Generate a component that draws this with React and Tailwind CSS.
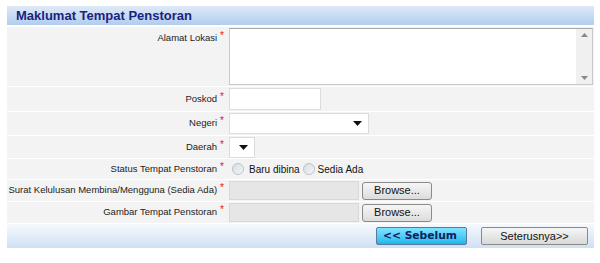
import React from 'react';

const Req = () => <span className="text-[#e02020] text-[10px] relative -top-[3px] ml-[3px]">*</span>;

const Row = ({ label, h, top, children }) => (
	<div className={`flex border-b border-white bg-[#f3f3f3] ${h}`}>
		<div className={`w-[222px] shrink-0 flex justify-end pr-[5px] whitespace-nowrap ${top ? 'items-start pt-[4px]' : 'items-center'}`}>
			<span className="text-[#222]">{label}</span>
			<Req />
		</div>
		<div className="flex-1 flex items-center">{children}</div>
	</div>
);

const Caret = () => (
	<svg width="9" height="5" viewBox="0 0 9 5"><path d="M0 0h9L4.5 5z" fill="#111" /></svg>
);

const FileInput = () => (
	<div className="flex items-center">
		<div className="w-[130px] h-[19px] bg-[#e6e6e6] border border-[#d8d8d8]" />
		<button className="ml-[3px] w-[70px] h-[18px] rounded-[3px] border border-[#8a8a8a] bg-gradient-to-b from-[#f6f6f6] to-[#dcdcdc] text-[11px] text-[#111] leading-none">Browse...</button>
	</div>
);

const Radio = () => (
	<span className="inline-block w-[12px] h-[12px] rounded-full border border-[#b9c4cc] bg-gradient-to-br from-[#d8dde2] to-[#f4f6f8]" />
);

export default function App() {
	return (
		<div className="w-[600px] h-[263px] bg-white pt-[6px] pl-[7px] text-[9.5px] font-['Liberation_Sans',Arial,sans-serif]">
			<div className="w-[587px]">
				<div className="h-[19px] bg-gradient-to-b from-[#dfe9f8] to-[#b2cdee] pl-[9px] flex items-center">
					<span className="text-[13px] font-bold text-[#1a237e]">Maklumat Tempat Penstoran</span>
				</div>
				<div className="h-[2px]" />
				<Row label="Alamat Lokasi" h="h-[60px]" top>
					<div className="w-[364px] h-[57px] bg-white border border-[#c9c9c9] border-t-[#a8a8a8] flex justify-end">
						<div className="w-[16px] h-full bg-[#f0f0f0] flex flex-col justify-between items-center py-[4px]">
							<svg width="7" height="4" viewBox="0 0 7 4"><path d="M0 4h7L3.5 0z" fill="#888" /></svg>
							<svg width="7" height="4" viewBox="0 0 7 4"><path d="M0 0h7L3.5 4z" fill="#888" /></svg>
						</div>
					</div>
				</Row>
				<Row label="Poskod" h="h-[25px]">
					<div className="w-[92px] h-[22px] bg-white border border-[#dcdcdc]" />
				</Row>
				<Row label="Negeri" h="h-[24px]">
					<div className="w-[140px] h-[21px] bg-white border border-[#dcdcdc] flex items-center justify-end pr-[6px]"><Caret /></div>
				</Row>
				<Row label="Daerah" h="h-[23px]">
					<div className="w-[26px] h-[21px] bg-white border border-[#dcdcdc] flex items-center justify-end pr-[6px]"><Caret /></div>
				</Row>
				<Row label="Status Tempat Penstoran" h="h-[21px]">
					<div className="flex items-center text-[10px] text-[#111]">
						<span className="ml-[3px] flex"><Radio /></span>
						<span className="ml-[5px]">Baru dibina</span>
						<span className="ml-[3px] flex"><Radio /></span>
						<span className="ml-[3px]">Sedia Ada</span>
					</div>
				</Row>
				<Row label="Surat Kelulusan Membina/Mengguna (Sedia Ada)" h="h-[22px]">
					<FileInput />
				</Row>
				<Row label="Gambar Tempat Penstoran" h="h-[22px]">
					<FileInput />
				</Row>
				<div className="h-[24px] bg-gradient-to-b from-[#f6f9fd] to-[#cfe0f4] flex items-center justify-end pr-[6px] gap-[14px]">
					<button className="w-[91px] h-[18px] rounded-[2px] border border-[#5a7a9a] bg-gradient-to-b from-[#7fe3ff] to-[#0bb8f0] text-left pl-[6px] text-[10.7px] font-bold text-[#10205a] leading-none font-['DejaVu_Sans',Verdana,sans-serif]">&lt;&lt; Sebelum</button>
					<button className="w-[107px] h-[18px] rounded-[2px] border border-[#8a8a8a] bg-gradient-to-b from-[#f6f6f6] to-[#d9d9d9] text-[11px] text-[#111] leading-none">Seterusnya&gt;&gt;</button>
				</div>
			</div>
		</div>
	);
}
